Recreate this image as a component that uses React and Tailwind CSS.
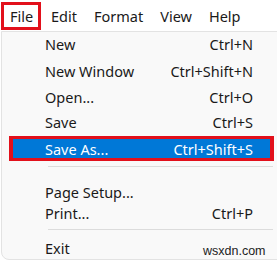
export default function App() {
  const font = { fontFamily: '"Noto Sans", "Open Sans", sans-serif' };
  const Item = ({ label, shortcut, pt }) => (
    <div className={`flex items-start justify-between pl-[43px] pr-[47px] text-[14.5px] leading-[20px] text-[#1a1a1a] ${pt}`}>
      <span>{label}</span>
      <span>{shortcut}</span>
    </div>
  );
  return (
    <div className="relative h-[262px] w-[277px] overflow-hidden bg-white" style={font}>
      <div className="flex h-[31px] items-start text-[14.5px] leading-[20px] text-[#1a1a1a]">
        <div className="ml-[1px] mt-[2px] flex h-[28px] w-[40px] items-center border-[3px] border-[#e2101b] pl-[6px]">File</div>
        <div className="ml-[10px] mt-[6px]">Edit</div>
        <div className="ml-[17px] mt-[6px]">Format</div>
        <div className="ml-[17px] mt-[6px]">View</div>
        <div className="ml-[17px] mt-[6px]">Help</div>
      </div>
      <div className="ml-[1px] w-[300px] rounded-bl-[8px] border border-[#e3e3e3] bg-[#f9f9f9] pb-[1px]">
        <Item label="New" shortcut="Ctrl+N" pt="pt-[2px]" />
        <Item label="New Window" shortcut="Ctrl+Shift+N" pt="pt-[7px]" />
        <Item label="Open..." shortcut="Ctrl+O" pt="pt-[6px]" />
        <Item label="Save" shortcut="Ctrl+S" pt="pt-[5px]" />
        <div className="ml-[7px] mr-[26px] mt-[4px] border-x-[4px] border-y-[3px] border-[#e2101b]">
          <div className="flex h-[19px] items-center justify-between bg-[#0078d7] pl-[32px] pr-[17px] text-[14.5px] leading-[20px] text-white">
            <span>Save As...</span>
            <span>Ctrl+Shift+S</span>
          </div>
        </div>
        <div className="ml-[46px] mr-[27px] mt-[5px] h-px bg-[#dcdcdc]" />
        <Item label="Page Setup..." shortcut="" pt="pt-[15px]" />
        <Item label="Print..." shortcut="Ctrl+P" pt="pt-[1px]" />
        <div className="ml-[46px] mr-[27px] mt-[6px] h-px bg-[#dcdcdc]" />
        <Item label="Exit" shortcut="" pt="pt-[8px]" />
      </div>
      <div
        className="absolute left-[203px] top-[244px] text-[12.5px] leading-[14px] text-[#222]"
        style={{ fontFamily: '"Liberation Sans", Arial, sans-serif' }}
      >
        wsxdn.com
      </div>
    </div>
  );
}
